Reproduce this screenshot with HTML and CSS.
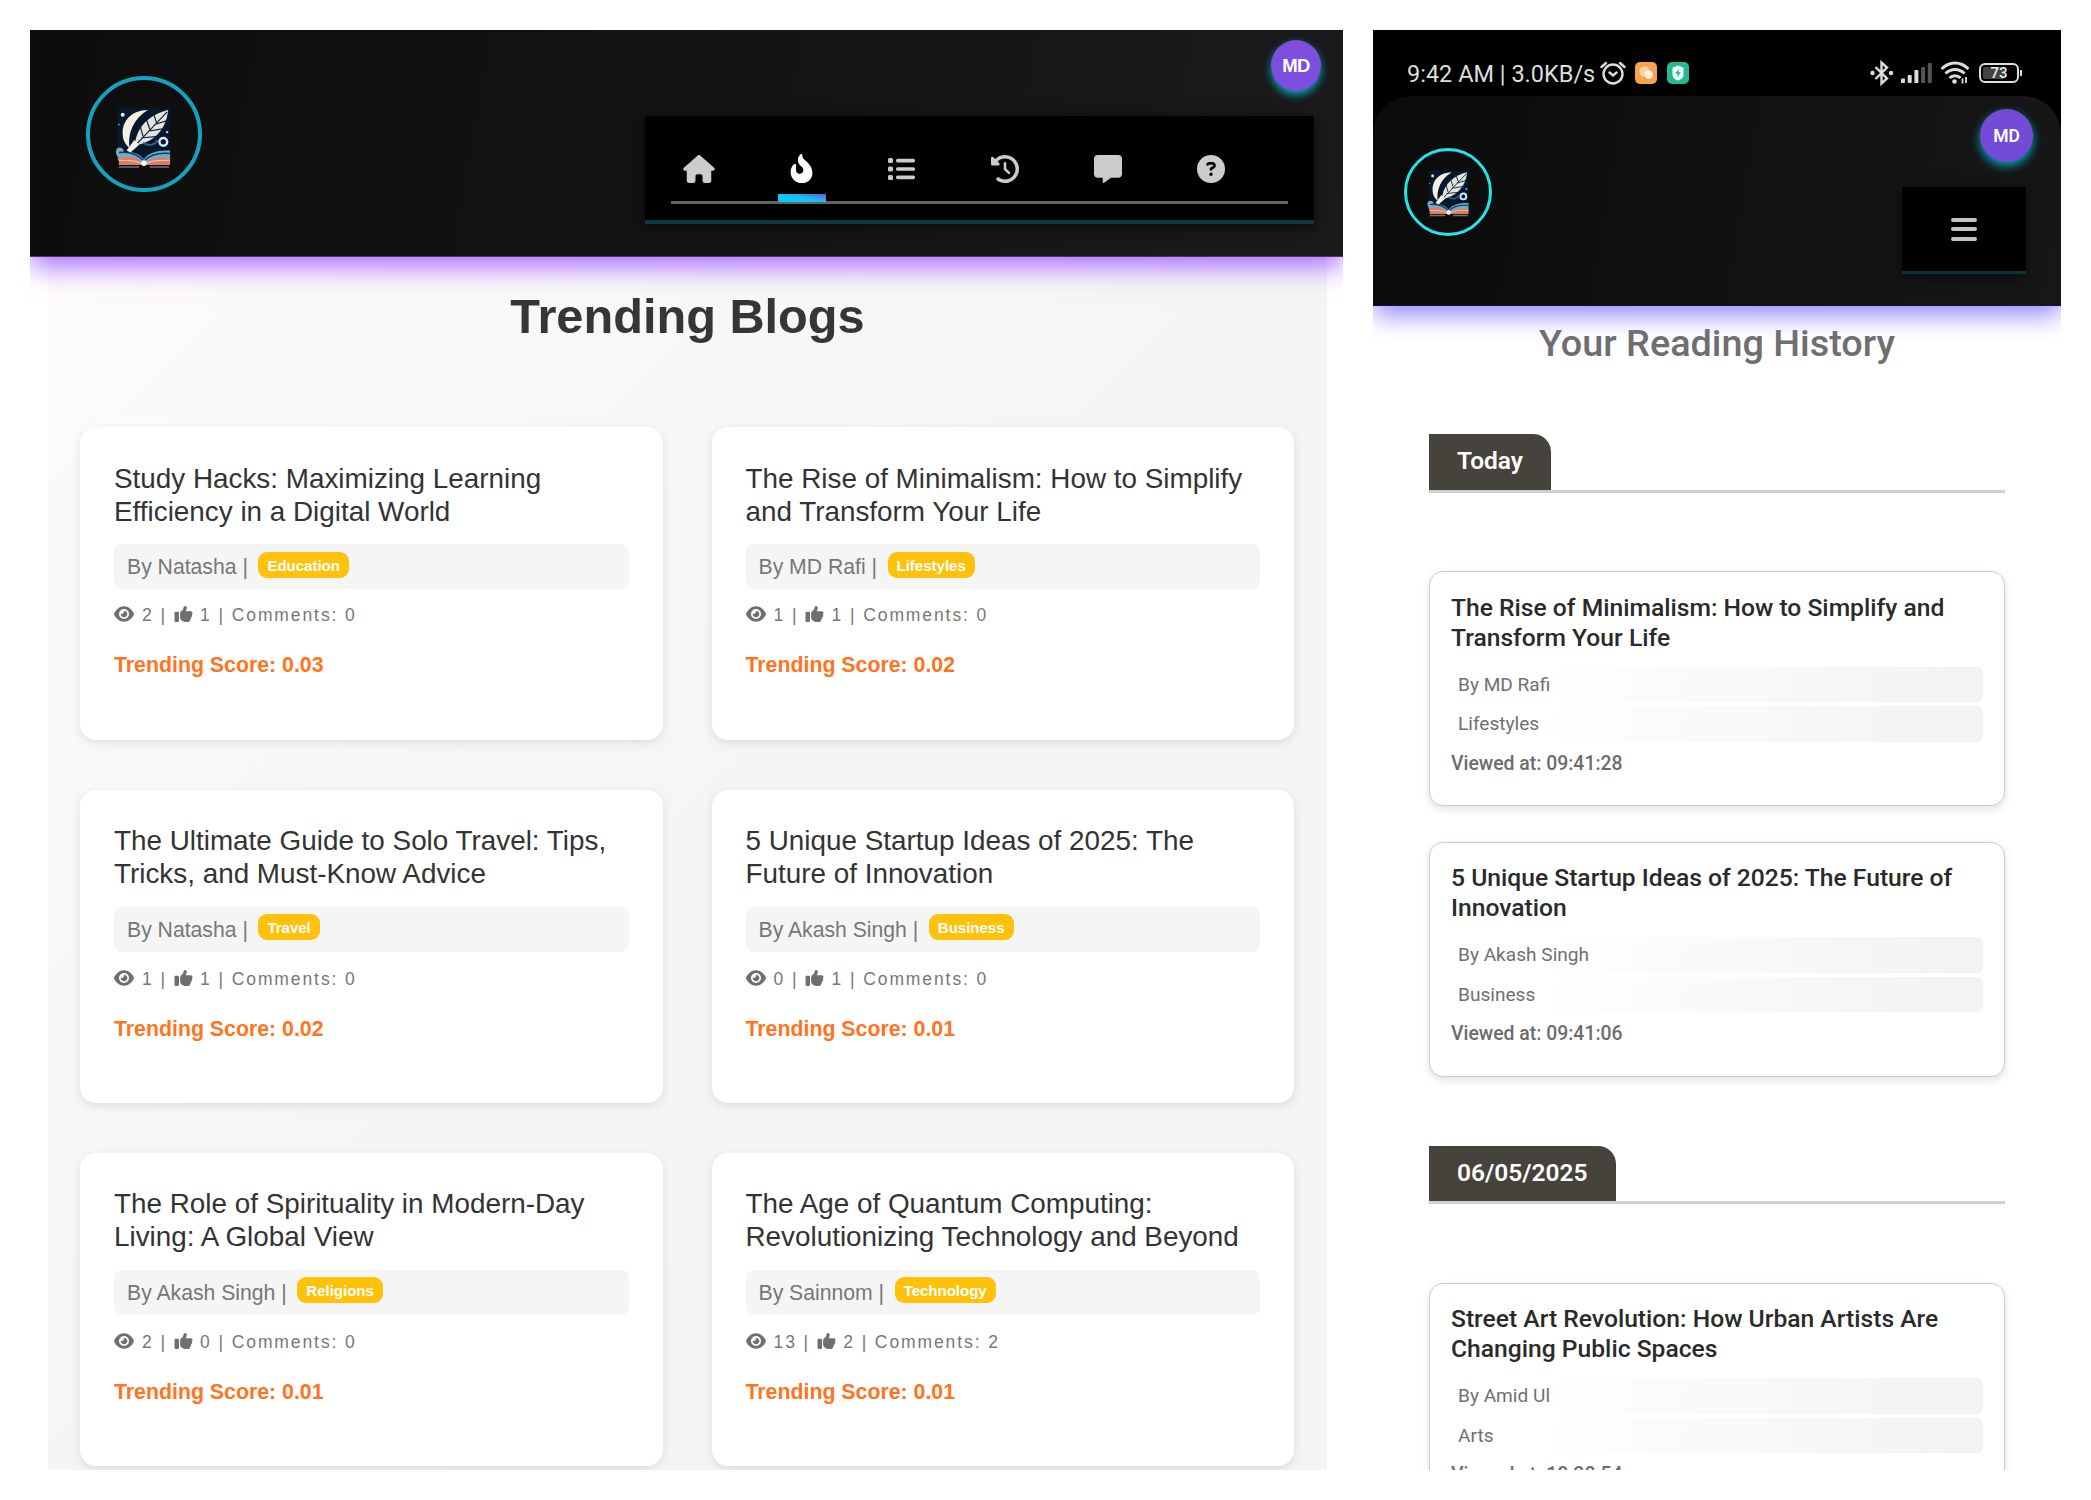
FILE: index.html
```html
<!DOCTYPE html>
<html lang="en">
<head>
<meta charset="utf-8">
<title>Trending Blogs</title>
<link rel="stylesheet" href="styles.css">
</head>
<body>
<svg class="sprite" aria-hidden="true">
  <symbol id="eye" viewBox="0 0 576 512"><path d="M288 32c-80.800 0-145.500 36.800-192.600 80.600C48.600 156 17.300 208 2.500 243.700c-3.300 7.900-3.300 16.700 0 24.600C17.300 304 48.600 356 95.400 399.400C142.500 443.200 207.200 480 288 480s145.500-36.800 192.600-80.600c46.800-43.500 78.100-95.400 93-131.100c3.300-7.900 3.300-16.700 0-24.600c-14.900-35.700-46.200-87.700-93-131.100C433.500 68.800 368.800 32 288 32zM144 256a144 144 0 1 1 288 0 144 144 0 1 1 -288 0zm144-64c0 35.300-28.700 64-64 64c-7.100 0-13.900-1.200-20.300-3.300c-5.500-1.800-11.900 1.600-11.700 7.400c.3 6.900 1.300 13.800 3.200 20.700c13.700 51.200 66.400 81.600 117.600 67.900s81.600-66.400 67.900-117.600c-11.100-41.500-47.800-69.400-88.600-71.100c-5.800-.2-9.200 6.100-7.400 11.700c2.100 6.400 3.300 13.200 3.300 20.300z"/></symbol>
  <symbol id="like" viewBox="0 0 512 512"><path d="M313.400 32.900c26 5.200 42.900 30.500 37.700 56.500l-2.300 11.400c-5.300 26.700-15.100 52.100-28.800 75.200H464c26.500 0 48 21.500 48 48c0 18.500-10.500 34.600-25.900 42.600C497 275.400 504 288.900 504 304c0 23.400-16.800 42.900-38.900 47.100c4.400 7.300 6.900 15.800 6.900 24.900c0 21.300-13.900 39.400-33.100 45.600c.7 3.300 1.100 6.800 1.100 10.400c0 26.500-21.500 48-48 48H294.500c-19 0-37.500-5.600-53.300-16.100l-38.500-25.700C176 420.400 160 390.400 160 358.300V247.100c0-29.200 13.300-56.700 36-75l7.400-5.900c26.500-21.200 44.600-51 51.200-84.200l2.300-11.400c5.200-26 30.500-42.900 56.500-37.700zM32 192H96c17.700 0 32 14.300 32 32V448c0 17.700-14.300 32-32 32H32c-17.700 0-32-14.300-32-32V224c0-17.700 14.300-32 32-32z"/></symbol>
  <symbol id="quill" viewBox="0 0 60 64">
    <rect x="4" y="1" width="54" height="56" rx="3" fill="#07182b"/>
    <path d="M35 3C18 3 8 15 9 28c0 6 3 11 7 14C14 27 20 12 35 3z" fill="#f4f0e6"/>
    <path d="M56 3C40 7 25 17 22 36l3 3C42 35 54 23 56 3z" fill="#e4e4df"/>
    <path d="M55 5L17 45M26 16l4 14M33 11l4 12M41 7l3 9M55 14L42 18M53 22L35 25M48 30L28 32" fill="none" stroke="#0b2038" stroke-width="1.200"/>
    <path d="M21 34l5 5-9 8-4-2z" fill="#f5f1ea"/>
    <circle cx="51" cy="36" r="4" fill="none" stroke="#dfe8ee" stroke-width="2.500"/>
    <circle cx="9" cy="8" r="2" fill="#e8eef2"/><circle cx="5" cy="18" r=".8" fill="#b9cad6"/><circle cx="55" cy="26" r="1.200" fill="#c9d6df"/>
    <path d="M30 37c7 4 13 2 15-3" fill="none" stroke="#2e6487" stroke-width="2"/>
    <path d="M4 52c-5-7 0-13 5-9 3 3-1 6-3 4 8-1 19-1 25 7 4-7 16-10 27-9v9c-11-1-20 0-27 6-7-6-18-6-27-5z" fill="#73a9cb"/>
    <path d="M5 47c10-1 19 1 26 9 6-7 15-9 27-8" fill="none" stroke="#123c60" stroke-width="1.600"/>
    <path d="M5 52c11-1 20 0 26 7 6-6 15-7 27-6v7H5z" fill="#db7d61"/>
    <path d="M5 55c10 0 20 0 26 5 6-5 15-5 27-5" fill="none" stroke="#f1c5ac" stroke-width="1.200"/>
    <path d="M5 62h21M37 62h20" stroke="#6c7379" stroke-width="1.800"/>
    <rect x="28.500" y="55" width="5" height="6" rx="2" fill="#fff"/>
  </symbol>
</svg>

<section class="pane desktop">
  <header class="topbar">
    <div class="logo"><svg><use href="#quill"/></svg></div>
    <div class="avatar">MD</div>
    <nav class="nav">
      <ul class="nav-list">
        <li><svg width="32" height="28" viewBox="0 0 576 512"><path d="M575.800 255.500c0 18-15 32.100-32 32.100h-32l.7 160.200c0 2.700-.2 5.400-.5 8.100V472c0 22.100-17.900 40-40 40H392c-22.100 0-40-17.900-40-40V384c0-17.700-14.300-32-32-32H256c-17.700 0-32 14.300-32 32v88c0 22.100-17.900 40-40 40H104c-22.100 0-40-17.900-40-40V287.600H32c-18 0-32-14-32-32.100c0-9 3-17 10-24L266.400 8c7-7 15-8 22-8s15 2 21 7L564.800 231.500c8 7 12 15 11 24z"/></svg></li>
        <li class="active"><svg width="23" height="29" viewBox="0 0 384 512"><path d="M153.600 29.900l16-21.300C173.600 3.200 180 0 186.700 0C198.400 0 208 9.600 208 21.300V43.500c0 13.100 5.400 25.700 14.900 34.700L307.600 159C356.400 205.600 384 270.200 384 337.700C384 434 306 512 209.700 512H192C86 512 0 426 0 320v-3.800c0-48.800 19.400-95.600 53.900-130.100l3.500-3.500c4.200-4.200 10-6.600 16-6.600C85.900 176 96 186.100 96 198.600V288c0 35.300 28.700 64 64 64s64-28.700 64-64v-3.900c0-18-7.200-35.300-19.900-48l-38.600-38.600c-24-24-37.500-56.700-37.500-90.700c0-27.700 9-54.800 25.600-76.900z"/></svg></li>
        <li><svg width="28" height="28" viewBox="0 0 28 28"><rect x="0" y="3" width="5" height="5" rx="1.500"/><rect x="0" y="11.500" width="5" height="5" rx="1.500"/><rect x="0" y="20" width="5" height="5" rx="1.500"/><rect x="8" y="3.800" width="19" height="3.600" rx="1.600"/><rect x="8" y="12.200" width="19" height="3.600" rx="1.600"/><rect x="8" y="20.600" width="19" height="3.600" rx="1.600"/></svg></li>
        <li><svg width="28" height="28" viewBox="0 0 512 512"><path d="M75 75L41 41C25.900 25.900 0 36.600 0 57.900V168c0 13.300 10.700 24 24 24H134.100c21.400 0 32.100-25.900 17-41l-30.800-30.800C155 85.500 203 64 256 64c106 0 192 86 192 192s-86 192-192 192c-40.800 0-78.600-12.700-109.700-34.400c-14.500-10.100-34.400-6.600-44.600 7.900s-6.600 34.400 7.900 44.600C151.200 495 201.700 512 256 512c141.400 0 256-114.600 256-256S397.400 0 256 0C185.300 0 121.300 28.700 75 75zm181 53c-13.300 0-24 10.700-24 24V256c0 6.400 2.500 12.500 7 17l72 72c9.400 9.400 24.600 9.400 33.900 0s9.400-24.600 0-33.900l-65-65V152c0-13.300-10.700-24-24-24z"/></svg></li>
        <li><svg width="28" height="28" viewBox="0 0 512 512"><path d="M64 0C28.700 0 0 28.700 0 64V352c0 35.300 28.700 64 64 64h96v80c0 6.100 3.400 11.600 8.800 14.300s11.900 2.100 16.800-1.500L309.300 416H448c35.300 0 64-28.700 64-64V64c0-35.300-28.700-64-64-64H64z"/></svg></li>
        <li><svg width="28" height="28" viewBox="0 0 512 512"><path d="M256 512A256 256 0 1 0 256 0a256 256 0 1 0 0 512zM169.800 165.300c7.900-22.300 29.100-37.300 52.800-37.300h58.300c34.900 0 63.100 28.300 63.100 63.100c0 22.600-12.100 43.500-31.700 54.800L280 264.400c-.2 13-10.900 23.600-24 23.600c-13.300 0-24-10.700-24-24V250.500c0-8.600 4.600-16.500 12.100-20.800l44.300-25.400c4.700-2.700 7.600-7.700 7.600-13.100c0-8.400-6.800-15.100-15.100-15.100H222.600c-3.400 0-6.400 2.100-7.500 5.300l-.4 1.200c-4.400 12.500-18.200 19-30.600 14.600s-19-18.200-14.600-30.600l.4-1.200zM224 352a32 32 0 1 1 64 0 32 32 0 1 1 -64 0z"/></svg></li>
      </ul>
    </nav>
  </header>
  <main class="trending">
    <h1>Trending Blogs</h1>
    <div class="grid">
      <article class="blog">
        <h2>Study Hacks: Maximizing Learning<br>Efficiency in a Digital World</h2>
        <p class="by">By Natasha | <span class="badge">Education</span></p>
        <p class="stats"><svg class="eye"><use href="#eye"/></svg> 2 | <svg class="like"><use href="#like"/></svg> 1 | Comments: 0</p>
        <p class="score">Trending Score: 0.03</p>
      </article>
      <article class="blog">
        <h2>The Rise of Minimalism: How to Simplify<br>and Transform Your Life</h2>
        <p class="by">By MD Rafi | <span class="badge">Lifestyles</span></p>
        <p class="stats"><svg class="eye"><use href="#eye"/></svg> 1 | <svg class="like"><use href="#like"/></svg> 1 | Comments: 0</p>
        <p class="score">Trending Score: 0.02</p>
      </article>
      <article class="blog">
        <h2>The Ultimate Guide to Solo Travel: Tips,<br>Tricks, and Must-Know Advice</h2>
        <p class="by">By Natasha | <span class="badge">Travel</span></p>
        <p class="stats"><svg class="eye"><use href="#eye"/></svg> 1 | <svg class="like"><use href="#like"/></svg> 1 | Comments: 0</p>
        <p class="score">Trending Score: 0.02</p>
      </article>
      <article class="blog">
        <h2>5 Unique Startup Ideas of 2025: The<br>Future of Innovation</h2>
        <p class="by">By Akash Singh | <span class="badge">Business</span></p>
        <p class="stats"><svg class="eye"><use href="#eye"/></svg> 0 | <svg class="like"><use href="#like"/></svg> 1 | Comments: 0</p>
        <p class="score">Trending Score: 0.01</p>
      </article>
      <article class="blog">
        <h2>The Role of Spirituality in Modern-Day<br>Living: A Global View</h2>
        <p class="by">By Akash Singh | <span class="badge">Religions</span></p>
        <p class="stats"><svg class="eye"><use href="#eye"/></svg> 2 | <svg class="like"><use href="#like"/></svg> 0 | Comments: 0</p>
        <p class="score">Trending Score: 0.01</p>
      </article>
      <article class="blog">
        <h2>The Age of Quantum Computing:<br>Revolutionizing Technology and Beyond</h2>
        <p class="by">By Sainnom | <span class="badge">Technology</span></p>
        <p class="stats"><svg class="eye"><use href="#eye"/></svg> 13 | <svg class="like"><use href="#like"/></svg> 2 | Comments: 2</p>
        <p class="score">Trending Score: 0.01</p>
      </article>
    </div>
  </main>
</section>

<section class="pane phone">
  <header class="phone-top">
    <div class="status">
      <span class="clock">9:42 AM | 3.0KB/s</span>
      <svg class="s-alarm" width="26" height="24" viewBox="0 0 26 24" fill="none" stroke="#ddd" stroke-width="2.400" stroke-linecap="round"><circle cx="13" cy="13" r="9.500"/><path d="M9.500 11.500L13 14.500l3.500-3M1.500 6L6 2M24.500 6L20 2"/></svg>
      <svg class="s-app" width="22" height="22" viewBox="0 0 22 22"><rect width="22" height="22" rx="5" fill="#fba04b"/><circle cx="9.500" cy="9.500" r="5.200" fill="#fdd2a6"/><circle cx="13.800" cy="12.800" r="4.200" fill="#fff0e0"/></svg>
      <svg class="s-app2" width="22" height="22" viewBox="0 0 22 22"><rect width="22" height="22" rx="5" fill="#25b893"/><path d="M11 3.500l5.500 2.200v7c0 3-2.500 4.800-5.500 5.800-3-1-5.500-2.800-5.500-5.800v-7z" fill="#f2fffb"/><path d="M12 6.500L8 11.800h2.800L10 15.500l4-5.300h-2.800z" fill="#25b893"/></svg>
      <svg class="s-bt" width="24" height="26" viewBox="0 0 24 26" fill="none" stroke="#ddd" stroke-width="2.400"><path d="M5.500 7l11.500 11.500-5.500 5V2.500l5.500 5L5.500 19"/><circle cx="2.500" cy="13" r="1" fill="#ddd"/><circle cx="21" cy="13" r="1" fill="#ddd"/></svg>
      <svg class="s-sig" width="31" height="20" viewBox="0 0 31 20"><g fill="#ddd"><rect x="0" y="15.500" width="4" height="4.500" rx="1"/><rect x="6.700" y="12" width="4" height="8" rx="1"/><rect x="13.400" y="7" width="4" height="13" rx="1"/></g><g fill="#555"><rect x="20.100" y="4" width="4" height="16" rx="1"/><rect x="26.800" y="0" width="4" height="20" rx="1"/></g></svg>
      <svg class="s-wifi" width="30" height="24" viewBox="0 0 30 24" fill="none" stroke="#ddd" stroke-width="3"><path d="M1.500 8c8-8 19-8 27 0M5.500 12.500c5.500-5.500 13.500-5.500 19 0M9.500 17c3-3 8-3 11 0"/><circle cx="14.500" cy="20.500" r="2.300" fill="#ddd" stroke="none"/><path d="M22.500 17.500v5M26 16v6" stroke-width="1.800"/></svg>
      <span class="battery"><span>73</span></span>
    </div>
    <div class="phone-bar">
      <div class="logo"><svg><use href="#quill"/></svg></div>
      <div class="avatar">MD</div>
      <div class="burger"><i></i><i></i><i></i></div>
    </div>
  </header>
  <main class="history">
    <h1>Your Reading History</h1>
    <div class="day"><span>Today</span></div>
    <article class="entry">
      <h2>The Rise of Minimalism: How to Simplify and<br>Transform Your Life</h2>
      <p class="meta">By MD Rafi</p>
      <p class="meta">Lifestyles</p>
      <p class="viewed">Viewed at: 09:41:28</p>
    </article>
    <article class="entry">
      <h2>5 Unique Startup Ideas of 2025: The Future of<br>Innovation</h2>
      <p class="meta">By Akash Singh</p>
      <p class="meta">Business</p>
      <p class="viewed">Viewed at: 09:41:06</p>
    </article>
    <div class="day"><span>06/05/2025</span></div>
    <article class="entry">
      <h2>Street Art Revolution: How Urban Artists Are<br>Changing Public Spaces</h2>
      <p class="meta">By Amid Ul</p>
      <p class="meta">Arts</p>
      <p class="viewed">Viewed at: 18:28:54</p>
    </article>
  </main>
</section>
</body>
</html>
```
FILE: styles.css
```css
* { box-sizing: border-box; margin: 0; padding: 0; }
html { background: #fff; }
body {
  display: flex;
  gap: 30px;
  padding: 30px;
  width: 2091px;
  height: 1500px;
  overflow: hidden;
  background: #fff;
  font-family: "Liberation Sans", Arial, sans-serif;
}
.sprite { position: absolute; width: 0; height: 0; }
.pane { height: 1440px; overflow: hidden; flex: none; }
.desktop { width: 1313px; }
.phone { width: 688px; font-family: Roboto, sans-serif; background: #fff; }

.logo {
  display: flex;
  align-items: center;
  justify-content: center;
  border-radius: 50%;
  flex: none;
}
.avatar {
  position: absolute;
  display: flex;
  align-items: center;
  justify-content: center;
  border-radius: 50%;
  color: #fff;
  font-weight: 700;
}

/* desktop header */
.topbar {
  position: relative;
  z-index: 1;
  display: flex;
  justify-content: space-between;
  align-items: flex-start;
  height: 227px;
  padding: 46px 29px 0 56px;
  background: linear-gradient(100deg, #0d0d0d, #1a1a1a);
  border-bottom: 1px solid #4c3668;
  box-shadow: 0 9px 26px #a866ff;
}
.topbar .logo { width: 116px; height: 116px; border: 4px solid #13a3c1; }
.topbar .logo svg { width: 58px; height: 62px; margin: 8px 3px 0 0; }
.topbar .avatar {
  top: 10px;
  right: 22px;
  width: 50px;
  height: 51px;
  background: #7c4fdf;
  font-size: 18.500px;
  letter-spacing: -.7px;
  box-shadow: 0 4px 9px #0aa3b8;
}
.nav {
  width: 669px;
  height: 108px;
  margin-top: 40px;
  padding: 28px 26px 0 26px;
  background: #010101;
  border-bottom: 4px solid #093844;
  box-shadow: 0 3px 12px rgba(0, 0, 0, .6);
}
.nav-list {
  display: flex;
  height: 60px;
  padding-left: 4px;
  list-style: none;
  border-bottom: 3px solid #636363;
}
.nav-list li {
  display: flex;
  justify-content: center;
  align-items: center;
  width: 48px;
  height: 50px;
  margin-right: 55px;
  fill: #ccc;
}
.nav-list li:last-child { margin-right: 0; }
.nav-list .active {
  height: 58px;
  margin-right: 51.500px;
  padding: 0 2px 10px 0;
  fill: #fff;
  background: linear-gradient(to top right, #10c6f5 50%, #7c4fdf) bottom / 100% 8px no-repeat;
}

/* trending grid */
.trending {
  height: 1230px;
  margin: 0 16px 0 18px;
  padding: 30px 32px 0;
  background: linear-gradient(135deg, #fdfbfc, #f5f5f5 50%, #f4f4f4);
}
.trending h1 {
  color: #363636;
  font-size: 48.700px;
  line-height: 58px;
  text-align: center;
}
.grid {
  display: grid;
  grid-template-columns: 582.500px 582.500px;
  grid-auto-rows: 313px;
  gap: 50px 49px;
  margin-top: 82px;
}
.blog {
  padding: 35px 34px 0;
  background: #fff;
  border-radius: 16px;
  box-shadow: 0 3px 10px rgba(0, 0, 0, .1);
}
.blog h2 {
  color: #333;
  font-size: 27.850px;
  font-weight: 400;
  line-height: 33px;
  white-space: nowrap;
}
.by {
  display: flex;
  height: 45px;
  margin-top: 16px;
  padding-left: 13px;
  border-radius: 8px;
  background: #f5f5f5;
  color: #777;
  font-size: 21.200px;
  line-height: 45px;
}
.badge {
  height: 26px;
  margin: 8px 0 0 10.500px;
  padding: 0 9px;
  border-radius: 9px;
  background: #ffc10a;
  color: #fff;
  font-size: 15px;
  font-weight: 700;
  line-height: 27px;
}
.stats {
  height: 24px;
  margin-top: 14px;
  color: #777;
  font-size: 17.500px;
  letter-spacing: 1.900px;
  line-height: 24px;
  white-space: nowrap;
}
.stats svg { fill: #6f6f6f; vertical-align: -2px; height: 18px; }
.stats .eye { width: 20px; margin-right: 1.300px; }
.stats .like { width: 19px; margin-right: .7px; }
.score {
  margin-top: 24.500px;
  color: #ff7420;
  font-size: 21.300px;
  font-weight: 700;
  line-height: 26px;
}
.blog:nth-child(n+3) { padding-top: 33.500px; }
.blog:nth-child(n+3) .by { margin-top: 17px; }
.blog:nth-child(n+3) .badge { margin-top: 7.500px; }
.blog:nth-child(n+3) .stats { margin-top: 15.500px; }

/* phone header */
.phone-top {
  position: relative;
  z-index: 1;
  height: 276px;
  background: #000;
  box-shadow: 0 9px 24px #9485ff;
}
.status {
  display: flex;
  align-items: center;
  height: 66px;
  padding: 0 38px 0 34px;
}
.clock { width: 193px; color: #ddd; font-size: 23.500px; line-height: 28px; white-space: nowrap; margin-top: 21px; }
.status svg { margin-top: 20px; flex: none; }
.s-app { margin-left: 9px; }
.s-app2 { margin-left: 10px; }
.s-bt { margin-left: 181px; }
.s-sig { margin-left: 7px; }
.s-wifi { margin-left: 8px; }
.battery {
  position: relative;
  width: 40px;
  height: 20px;
  margin: 19px 0 0 9px;
  padding: 2px;
  border: 2px solid #ddd;
  border-radius: 6px;
  color: #eee;
  font-size: 15px;
  font-weight: 500;
  line-height: 13px;
  text-align: center;
  background: linear-gradient(90deg, #444 66%, #000 66%) content-box;
}
.battery::after {
  content: "";
  position: absolute;
  right: -5px;
  top: 5px;
  width: 2px;
  height: 6px;
  background: #ddd;
}
.phone-bar {
  position: relative;
  display: flex;
  justify-content: space-between;
  align-items: flex-start;
  height: 210px;
  padding: 52px 35px 0 31px;
  border-radius: 38px 38px 0 0;
  border-bottom: 1px solid #11123a;
  background: linear-gradient(100deg, #0b0b0b, #171717);
}
.phone-bar .logo { width: 88px; height: 88px; border: 3px solid #22e5e9; }
.phone-bar .logo svg { width: 44px; height: 47px; margin: 2px 1px 0 0; }
.phone-bar .avatar {
  top: 13px;
  right: 28px;
  width: 53px;
  height: 53px;
  background: #734bd6;
  font-size: 17.500px;
  font-weight: 600;
  box-shadow: 0 4px 10px #04a5bb;
}
.burger {
  display: flex;
  flex-direction: column;
  align-items: center;
  gap: 5.300px;
  width: 124px;
  height: 87px;
  margin-top: 39px;
  padding-top: 31px;
  background: #010101;
  border-bottom: 3px solid #0a343b;
  box-shadow: 0 3px 12px rgba(0, 0, 0, .5);
}
.burger i { width: 26px; height: 4px; border-radius: 2px; background: #c4c4c4; flex: none; }

/* reading history */
.history { padding: 15px 56px 0; }
.history h1 {
  color: #6e6e6e;
  font-size: 37.800px;
  font-weight: 500;
  line-height: 44px;
  text-align: center;
}
.day {
  display: flex;
  height: 58.500px;
  margin: 69px 0 78.500px;
  border-bottom: 3px solid #d0d0d0;
}
.day span {
  padding: 0 28px;
  border-top-right-radius: 18px;
  background: #46423c;
  color: #fff;
  font-size: 24.500px;
  font-weight: 600;
  line-height: 53px;
}
.entry {
  height: 235px;
  padding: 20.500px 21px 0 21px;
  border: 1px solid #ccc;
  border-radius: 14px;
  background: #fff;
  box-shadow: 0 3px 8px rgba(0, 0, 0, .12);
}
.entry + .entry { margin-top: 35.500px; }
.entry h2 {
  margin-bottom: 14px;
  color: #2a2a2a;
  font-size: 24.650px;
  font-weight: 500;
  line-height: 30px;
  white-space: nowrap;
}
.meta {
  height: 35.500px;
  margin: 0 0 4px;
  padding-left: 7px;
  border-radius: 6px;
  background: linear-gradient(100deg, #fff 15%, #f2f2f2);
  color: #707070;
  font-size: 19.100px;
  line-height: 35px;
}
.viewed {
  margin-top: 5px;
  padding-top: 5px;
  color: #6c6c6c;
  font-size: 19.400px;
  font-weight: 500;
  line-height: 24px;
}
```
